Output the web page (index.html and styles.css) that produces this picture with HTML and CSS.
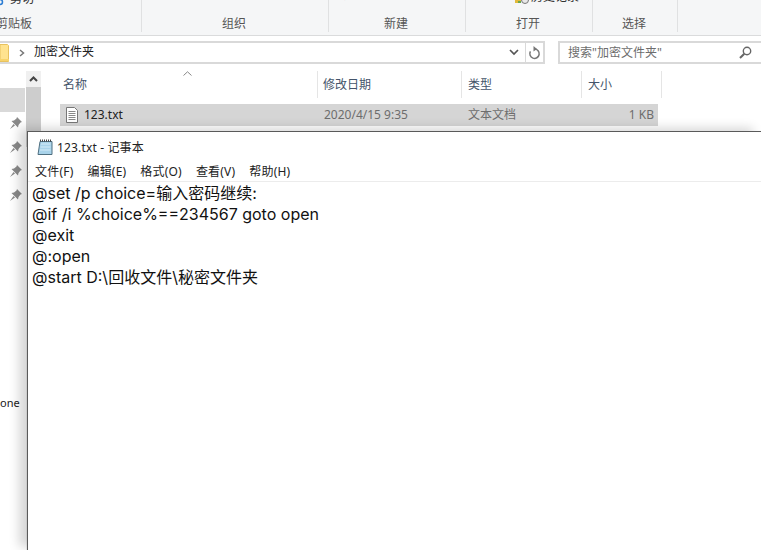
FILE: index.html
```html
<!DOCTYPE html>
<html lang="zh">
<head>
<meta charset="utf-8">
<title>123.txt - 记事本</title>
<link rel="stylesheet" href="styles.css">
</head>
<body>
<div class="explorer">
  <div class="ribbon">
    <div class="group g1"><div class="top"><svg class="cut" width="6" height="8" viewBox="0 0 6 8"><circle cx="0" cy="3" r="2.5" fill="none" stroke="#2b7cd3" stroke-width="1.5"/></svg><span class="cuttext">剪切</span></div><div class="glabel gl-left">剪贴板</div></div>
    <div class="group g2"><div class="top"></div><div class="glabel">组织</div></div>
    <div class="group g3"><div class="top"><span class="clip c3">新建项目</span></div><div class="glabel">新建</div></div>
    <div class="group g4"><div class="top"><svg class="open-ic" width="14" height="4" viewBox="0 0 14 4"><rect x="0" y="0" width="6" height="3" fill="#e2b93b"/><rect x="3" y="1" width="3" height="2" fill="#6aa84f"/><circle cx="10" cy="0" r="3.5" fill="#e8e8e8" stroke="#777"/></svg><span class="clip c4">历史记录</span></div><div class="glabel">打开</div></div>
    <div class="group g5"><div class="top"></div><div class="glabel">选择</div></div>
  </div>
  <div class="addr-row">
    <div class="addr">
      <svg class="folder" width="10" height="18" viewBox="0 0 10 18"><path d="M0 .5H7.500L8.500 1.500V17.500H0Z" fill="#ffe38f" stroke="#e8c25e"/><rect x="0" y="15" width="9" height="2" fill="#f7d36b"/></svg>
      <svg class="crumb" width="6" height="8" viewBox="0 0 6 8"><path d="M1 1L4.500 4L1 7" fill="none" stroke="#777" stroke-width="1.500"/></svg>
      <span class="addr-text">加密文件夹</span>
      <svg class="chev" width="10" height="7" viewBox="0 0 10 7"><path d="M1 1L5 5L9 1" fill="none" stroke="#555" stroke-width="1.700"/></svg>
      <div class="refresh"><svg width="13" height="14" viewBox="0 0 13 14"><path d="M6.500 3A4.700 4.700 0 1 1 2.400 5.400" fill="none" stroke="#777" stroke-width="1.500"/><path d="M5.500 0V5.500L9 3Z" fill="#777"/></svg></div>
    </div>
    <div class="search">
      <span class="search-text">搜索"加密文件夹"</span>
      <svg width="13" height="13" viewBox="0 0 13 13"><circle cx="8" cy="5" r="3.700" fill="none" stroke="#666" stroke-width="1.400"/><path d="M5.300 7.700L1 12" stroke="#666" stroke-width="2"/></svg>
    </div>
  </div>
  <div class="body">
    <aside class="nav">
      <div class="nav-list">
        <div class="nav-sel"></div>
        <div class="pins">
          <svg class="pin" width="12" height="12" viewBox="0 0 12 12"><path d="M7 0L12 5L10.500 5.500L8.500 8L8 10.500L1.500 4L4 3.500L6.500 1.500Z M3.500 7L0 12L5 8.500Z" fill="#8a8a8a"/></svg>
          <svg class="pin" width="12" height="12" viewBox="0 0 12 12"><path d="M7 0L12 5L10.500 5.500L8.500 8L8 10.500L1.500 4L4 3.500L6.500 1.500Z M3.500 7L0 12L5 8.500Z" fill="#8a8a8a"/></svg>
          <svg class="pin" width="12" height="12" viewBox="0 0 12 12"><path d="M7 0L12 5L10.500 5.500L8.500 8L8 10.500L1.500 4L4 3.500L6.500 1.500Z M3.500 7L0 12L5 8.500Z" fill="#8a8a8a"/></svg>
          <svg class="pin" width="12" height="12" viewBox="0 0 12 12"><path d="M7 0L12 5L10.500 5.500L8.500 8L8 10.500L1.500 4L4 3.500L6.500 1.500Z M3.500 7L0 12L5 8.500Z" fill="#8a8a8a"/></svg>
        </div>
        <div class="nav-one">one</div>
      </div>
      <div class="scroll">
        <div class="sc-up"><svg width="9" height="6" viewBox="0 0 9 6"><path d="M1 5L4.500 1.500L8 5" fill="none" stroke="#444" stroke-width="2"/></svg></div>
        <div class="sc-thumb"></div>
      </div>
    </aside>
    <main class="files">
      <div class="sort"><svg width="9" height="5" viewBox="0 0 9 5"><path d="M.5 4.500L4.500 .8L8.500 4.500" fill="none" stroke="#888"/></svg></div>
      <div class="cols">
        <div class="col c-name">名称</div>
        <div class="col c-date">修改日期</div>
        <div class="col c-type">类型</div>
        <div class="col c-size">大小</div>
      </div>
      <div class="row">
        <div class="cell r-name"><svg width="12" height="16" viewBox="0 0 12 16"><path d="M.5 .5H8.500L11.500 3.500V15.500H.5Z" fill="#fff" stroke="#777"/><path d="M2.500 4.500H9.500M2.500 6.500H9.500M2.500 8.500H9.500M2.500 10.500H9.500M2.500 12.500H9.500" stroke="#888"/></svg><span>123.txt</span></div>
        <div class="cell r-date">2020/4/15 9:35</div>
        <div class="cell r-type">文本文档</div>
        <div class="cell r-size">1 KB</div>
      </div>
    </main>
  </div>
</div>
<section class="notepad">
  <div class="titlebar">
    <svg width="16" height="16" viewBox="0 0 16 16"><path d="M3 2.500H15V15.500H1Z" fill="#a9d3ea" stroke="#4f6f80"/><path d="M4 5H13.500M3.500 8H13.500M3 11H13.500" stroke="#d5ecf7"/><path d="M3 1.500H15" stroke="#444" stroke-width="2" stroke-dasharray="1 1"/></svg>
    <span class="title-text">123.txt - 记事本</span>
  </div>
  <nav class="menu"><span>文件(F)</span><span>编辑(E)</span><span>格式(O)</span><span>查看(V)</span><span>帮助(H)</span></nav>
  <pre class="editor">@set /p choice=输入密码继续:
@if /i %choice%==234567 goto open
@exit
@:open
@start D:\回收文件\秘密文件夹</pre>
</section>
</body>
</html>
```
FILE: styles.css
```css
html, body { margin: 0; padding: 0; width: 761px; height: 550px; overflow: hidden; background: #fff; }
body { position: relative; font-family: "Noto Sans", "Noto Sans CJK SC", sans-serif; color: #1a1a1a; font-size: 12px; }
svg { display: block; flex: none; }

.explorer { display: flex; flex-direction: column; height: 550px; }

.ribbon { display: flex; height: 35px; background: #f5f6f7; border-bottom: 1px solid #dadbdc; flex: none; }
.group { display: flex; flex-direction: column; height: 32px; border-right: 1px solid #e0e1e2; box-sizing: border-box; flex: none; }
.g1 { width: 142px; }
.g2 { width: 187px; }
.g3 { width: 137px; }
.g4 { width: 127px; }
.g5 { width: 85px; }
.top { height: 15px; overflow: hidden; display: flex; align-items: flex-start; }
.glabel { height: 17px; line-height: 17px; text-align: center; color: #555; font-size: 12px; padding-right: 2px; }
.gl-left { overflow: hidden; white-space: nowrap; direction: rtl; width: 32px; padding-right: 0; }
.cut { margin-top: -1px; }
.cuttext { margin: -10px 0 0 4px; line-height: 17px; font-size: 12px; color: #333; }
.clip { line-height: 12px; color: #333; white-space: nowrap; }
.c3 { margin: -10px 0 0 6px; font-size: 9px; }
.c4 { margin: -9px 0 0 2px; font-size: 12px; }
.open-ic { margin-left: 49px; }

.addr-row { display: flex; height: 23px; margin-top: 5px; flex: none; gap: 13px; }
.addr { width: 545px; border: 2px solid #d9d9d9; border-left: none; box-sizing: border-box; display: flex; align-items: center; }
.crumb { margin-left: 9px; }
.addr-text { margin: -4px 0 0 9px; font-size: 12px; color: #222; flex: 1; }
.chev { margin-right: 2px; }
.refresh { width: 17px; height: 100%; margin-left: 4px; border-left: 1px solid #d9d9d9; display: flex; align-items: center; justify-content: center; }
.search { flex: 1; border: 2px solid #d9d9d9; border-right: none; box-sizing: border-box; display: flex; align-items: center; padding: 0 9px 0 8px; justify-content: space-between; }
.search-text { color: #6d6d6d; font-size: 12px; margin-top: -2px; }

.body { display: flex; flex: 1; margin-top: 7px; min-height: 0; }
.nav { width: 42px; display: flex; flex: none; }
.nav-list { width: 26px; overflow: hidden; position: relative; }
.nav-sel { width: 25px; height: 24px; margin-top: 17px; background: #d9d9d9; }
.pins { display: flex; flex-direction: column; gap: 12px; margin: 5px 0 0 10px; }
.nav-one { position: absolute; left: 0; top: 324px; font-size: 11px; line-height: 16px; }
.scroll { width: 15px; background: #f0f0f0; }
.sc-up { height: 16px; display: flex; align-items: center; justify-content: center; }
.sc-thumb { height: 60px; background: #cdcdcd; }

.files { flex: 1; position: relative; padding-left: 18px; min-width: 0; }
.sort { position: absolute; left: 141px; top: 0; }
.cols { display: flex; height: 27px; align-items: center; color: #44546a; }
.col { height: 27px; line-height: 28px; box-sizing: border-box; border-right: 1px solid #e5e5e5; flex: none; padding-left: 3px; font-size: 12px; }
.c-name { width: 258px; }
.c-date { width: 144px; padding-left: 5px; }
.c-type { width: 120px; padding-left: 6px; }
.c-size { width: 80px; padding-left: 6px; }
.row { display: flex; margin-top: 6px; width: 598px; height: 22px; background: #d5d5d5; align-items: center; color: #6d6d6d; }
.cell { flex: none; font-size: 12px; margin-top: -2px; }
.r-name { width: 264px; display: flex; align-items: center; gap: 6px; padding-left: 6px; box-sizing: border-box; color: #222; margin-top: 0; }
.r-name span { margin-top: -2px; }
.r-date { width: 144px; }
.r-type { width: 130px; }
.r-size { width: 56px; text-align: right; }

.notepad { position: absolute; left: 27px; top: 131px; width: 734px; height: 419px; background: #fff; border-top: 1px solid #5a5a5a; border-left: 1px solid #5a5a5a; box-sizing: border-box; box-shadow: -8px -3px 10px rgba(0,0,0,.16); display: flex; flex-direction: column; }
.titlebar { height: 29px; display: flex; align-items: center; gap: 4px; padding-left: 9px; font-size: 12px; color: #222; flex: none; }
.title-text { letter-spacing: .15px; }
.menu { height: 19px; display: flex; align-items: center; gap: 14px; padding-left: 7px; font-size: 12px; letter-spacing: .2px; color: #222; flex: none; border-bottom: 1px solid #ececec; padding-bottom: 1px; }
.editor { margin: 0; padding: 1px 0 0 4px; font-family: Inter, "Noto Sans CJK SC", sans-serif; font-size: 16px; line-height: 21px; color: #111; flex: 1; }
```
